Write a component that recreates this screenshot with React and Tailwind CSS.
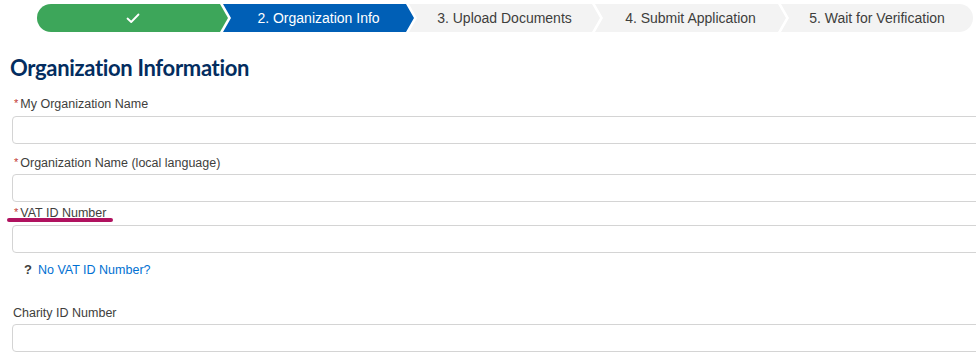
import React from "react";

const SANS = { fontFamily: '"Liberation Sans", Arial, sans-serif' };

function Step({ children, cls, first, last }) {
  return (
    <div
      className={
        "flex h-[28px] shrink-0 items-center justify-center text-[14px] " +
        cls +
        (first
          ? " rounded-l-full [clip-path:polygon(0_0,calc(100%-8px)_0,100%_50%,calc(100%-8px)_100%,0_100%)]"
          : last
          ? " -ml-[5px] rounded-r-full [clip-path:polygon(0_0,100%_0,100%_100%,0_100%,8px_50%)]"
          : " -ml-[5px] [clip-path:polygon(0_0,calc(100%-8px)_0,100%_50%,calc(100%-8px)_100%,0_100%,8px_50%)]")
      }
    >
      {children}
    </div>
  );
}

function Label({ children, required, className = "" }) {
  return (
    <div className={"flex items-start text-[12.5px] leading-[16px] text-[#3e3e3c] " + className}>
      {required && <span className="mr-[2px] text-[11px] leading-[14px] text-[#c23934]">*</span>}
      <span>{children}</span>
    </div>
  );
}

function Input({ className = "" }) {
  return (
    <div className={"h-[28px] w-[990px] rounded-[4px] border border-[#d4d4d4] bg-white " + className} />
  );
}

export default function App() {
  return (
    <div className="relative h-[364px] w-[976px] overflow-hidden bg-white" style={SANS}>
      <div className="flex pl-[37px] pt-[4px]">
        <Step first cls="w-[191px] bg-[#3da65a] text-white">
          <svg width="14" height="11" viewBox="0 0 14 11" fill="none">
            <path d="M1.5 5.5 L5.2 9 L12.5 1.5" stroke="white" strokeWidth="1.8" strokeLinecap="round" strokeLinejoin="round" />
          </svg>
        </Step>
        <Step cls="w-[191px] bg-[#005fb6] text-white">2. Organization Info</Step>
        <Step cls="w-[191px] bg-[#f3f3f3] text-[#3e3e3c]">3. Upload Documents</Step>
        <Step cls="w-[191px] bg-[#f3f3f3] text-[#3e3e3c]">4. Submit Application</Step>
        <Step last cls="w-[192px] bg-[#f3f3f3] text-[#3e3e3c]">5. Wait for Verification</Step>
      </div>

      <div className="pl-[12px]">
        <h1
          className="ml-[-2px] mt-[22px] text-[22px] font-bold leading-[28px] tracking-[-0.33px] text-[#032d60]"
          style={{ fontFamily: "Lato, sans-serif" }}
        >
          Organization Information
        </h1>

        <Label required className="mt-[14px] pl-[2px]">My Organization Name</Label>
        <Input className="mt-[4px]" />

        <Label required className="mt-[11px] pl-[2px]">Organization Name (local language)</Label>
        <Input className="mt-[3px]" />

        <div className="relative">
          <Label required className="mt-[3px] pl-[2px]">VAT ID Number</Label>
          <div className="absolute left-[-5px] top-[13px] h-[4px] w-[106px] rounded-full bg-[#b0125f]" />
        </div>
        <Input className="mt-[4px]" />

        <div className="mt-[9px] flex items-center pl-[12px] text-[12.5px] leading-[16px]">
          <span className="mr-[6px] text-[13px] font-bold text-[#3e3e3c]">?</span>
          <span className="text-[#0070d2]">No VAT ID Number?</span>
        </div>

        <Label className="mt-[27px] pl-[1px]">Charity ID Number</Label>
        <Input className="mt-[3px]" />
      </div>
    </div>
  );
}
